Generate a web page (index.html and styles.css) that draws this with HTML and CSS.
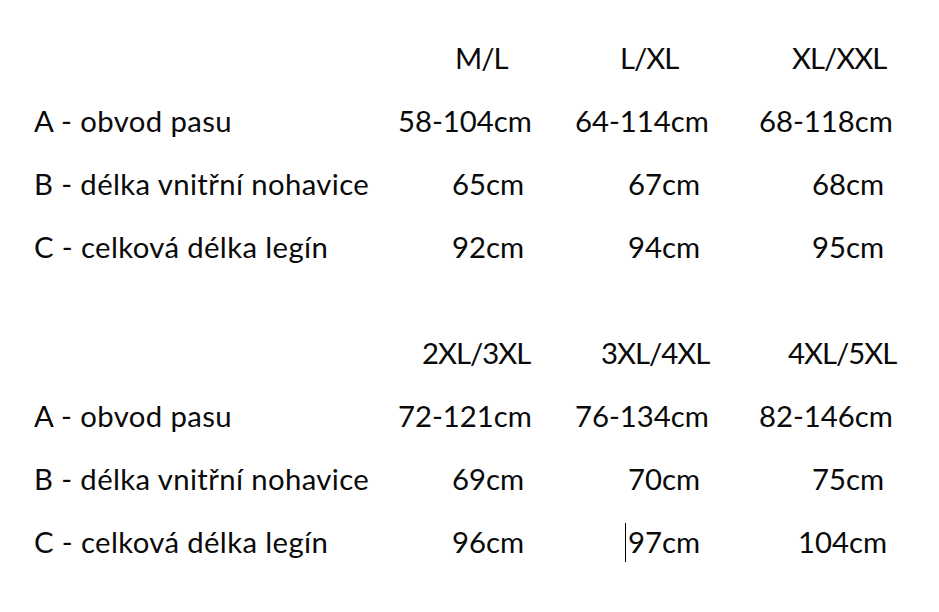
FILE: index.html
```html
<!DOCTYPE html>
<html lang="cs">
<head>
<meta charset="utf-8">
<title>Tabulka velikostí</title>
<link rel="stylesheet" href="styles.css">
</head>
<body>
<main class="sheet">
  <section class="block">
    <div class="cell label"></div>
    <div class="cell head i57">M/L</div>
    <div class="cell head i45">L/XL</div>
    <div class="cell head i33">XL/XXL</div>

    <div class="cell label">A - obvod pasu</div>
    <div class="cell">58-104cm</div>
    <div class="cell">64-114cm</div>
    <div class="cell">68-118cm</div>

    <div class="cell label">B - délka vnitřní nohavice</div>
    <div class="cell i54">65cm</div>
    <div class="cell i53">67cm</div>
    <div class="cell i53">68cm</div>

    <div class="cell label">C - celková délka legín</div>
    <div class="cell i54">92cm</div>
    <div class="cell i53">94cm</div>
    <div class="cell i53">95cm</div>
  </section>

  <section class="block second">
    <div class="cell label"></div>
    <div class="cell head i24">2XL/3XL</div>
    <div class="cell head i26">3XL/4XL</div>
    <div class="cell head i29">4XL/5XL</div>

    <div class="cell label">A - obvod pasu</div>
    <div class="cell">72-121cm</div>
    <div class="cell">76-134cm</div>
    <div class="cell">82-146cm</div>

    <div class="cell label">B - délka vnitřní nohavice</div>
    <div class="cell i54">69cm</div>
    <div class="cell i53">70cm</div>
    <div class="cell i53">75cm</div>

    <div class="cell label">C - celková délka legín</div>
    <div class="cell i54">96cm</div>
    <div class="cell i50"><span class="caret"></span>97cm</div>
    <div class="cell i39">104cm</div>
  </section>
</main>
</body>
</html>
```
FILE: styles.css
```css
html, body {
  margin: 0;
  padding: 0;
  background: #ffffff;
}

body {
  width: 939px;
  height: 612px;
  overflow: hidden;
  font-family: Lato, "Open Sans", "Liberation Sans", sans-serif;
  font-size: 29.3px;
  color: #0a0a0a;
}

.sheet {
  padding: 26px 0 0 34px;
}

.block {
  display: grid;
  grid-template-columns: 364px 177px 184px auto;
  grid-auto-rows: 63px;
}

.block.second {
  margin-top: 43px;
}

.cell {
  line-height: 63px;
  white-space: nowrap;
}

.label {
  letter-spacing: 0.38px;
}

.head {
  letter-spacing: -1px;
}

.caret {
  display: inline-block;
  width: 1px;
  height: 39px;
  background: #000;
  vertical-align: -9px;
  margin-right: 2px;
}

.i24 { padding-left: 24px; }
.i26 { padding-left: 26px; }
.i29 { padding-left: 29px; }
.i33 { padding-left: 33px; }
.i39 { padding-left: 39px; }
.i45 { padding-left: 45px; }
.i50 { padding-left: 50px; }
.i53 { padding-left: 53px; }
.i54 { padding-left: 54px; }
.i57 { padding-left: 57px; }
```
